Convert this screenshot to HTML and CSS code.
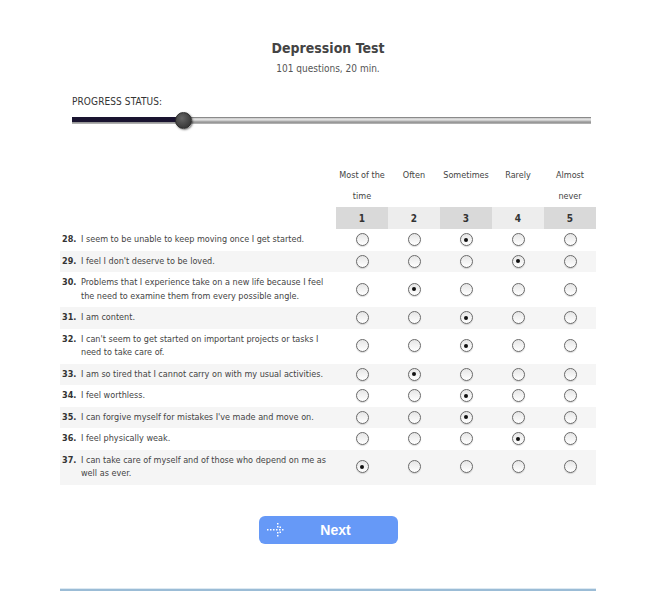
FILE: index.html
```html
<!DOCTYPE html>
<html lang="en">
<head>
    <meta charset="UTF-8">
    <title>Depression Test</title>
    <link rel="stylesheet" href="styles.css">
</head>
<body>
    <div class="page">
        <div class="head">
            <h1>Depression Test</h1>
            <p class="sub">101 questions, 20 min.</p>
        </div>

        <div class="progress">
            <p class="progress-label">PROGRESS STATUS:</p>
            <div class="track">
                <div class="track-done"></div>
                <div class="knob"></div>
            </div>
        </div>

        <table class="quiz">
            <thead>
                <tr class="labels">
                    <th class="q-col"></th>
                    <th>Most of the time</th>
                    <th>Often</th>
                    <th>Sometimes</th>
                    <th>Rarely</th>
                    <th>Almost never</th>
                </tr>
                <tr class="nums">
                    <th class="q-col blank"></th>
                    <th class="dark">1</th>
                    <th class="light">2</th>
                    <th class="dark">3</th>
                    <th class="light">4</th>
                    <th class="dark">5</th>
                </tr>
            </thead>
            <tbody>
                <tr><td class="q"><div class="qtext"><b>28.</b><span>I seem to be unable to keep moving once I get started.</span></div></td><td><input type="radio" name="q28"></td><td><input type="radio" name="q28"></td><td><input type="radio" name="q28" checked></td><td><input type="radio" name="q28"></td><td><input type="radio" name="q28"></td></tr>
                <tr class="alt"><td class="q"><div class="qtext"><b>29.</b><span>I feel I don't deserve to be loved.</span></div></td><td><input type="radio" name="q29"></td><td><input type="radio" name="q29"></td><td><input type="radio" name="q29"></td><td><input type="radio" name="q29" checked></td><td><input type="radio" name="q29"></td></tr>
                <tr><td class="q"><div class="qtext"><b>30.</b><span>Problems that I experience take on a new life because I feel the need to examine them from every possible angle.</span></div></td><td><input type="radio" name="q30"></td><td><input type="radio" name="q30" checked></td><td><input type="radio" name="q30"></td><td><input type="radio" name="q30"></td><td><input type="radio" name="q30"></td></tr>
                <tr class="alt"><td class="q"><div class="qtext"><b>31.</b><span>I am content.</span></div></td><td><input type="radio" name="q31"></td><td><input type="radio" name="q31"></td><td><input type="radio" name="q31" checked></td><td><input type="radio" name="q31"></td><td><input type="radio" name="q31"></td></tr>
                <tr><td class="q"><div class="qtext"><b>32.</b><span>I can't seem to get started on important projects or tasks I need to take care of.</span></div></td><td><input type="radio" name="q32"></td><td><input type="radio" name="q32"></td><td><input type="radio" name="q32" checked></td><td><input type="radio" name="q32"></td><td><input type="radio" name="q32"></td></tr>
                <tr class="alt"><td class="q"><div class="qtext"><b>33.</b><span>I am so tired that I cannot carry on with my usual activities.</span></div></td><td><input type="radio" name="q33"></td><td><input type="radio" name="q33" checked></td><td><input type="radio" name="q33"></td><td><input type="radio" name="q33"></td><td><input type="radio" name="q33"></td></tr>
                <tr><td class="q"><div class="qtext"><b>34.</b><span>I feel worthless.</span></div></td><td><input type="radio" name="q34"></td><td><input type="radio" name="q34"></td><td><input type="radio" name="q34" checked></td><td><input type="radio" name="q34"></td><td><input type="radio" name="q34"></td></tr>
                <tr class="alt"><td class="q"><div class="qtext"><b>35.</b><span>I can forgive myself for mistakes I've made and move on.</span></div></td><td><input type="radio" name="q35"></td><td><input type="radio" name="q35"></td><td><input type="radio" name="q35" checked></td><td><input type="radio" name="q35"></td><td><input type="radio" name="q35"></td></tr>
                <tr><td class="q"><div class="qtext"><b>36.</b><span>I feel physically weak.</span></div></td><td><input type="radio" name="q36"></td><td><input type="radio" name="q36"></td><td><input type="radio" name="q36"></td><td><input type="radio" name="q36" checked></td><td><input type="radio" name="q36"></td></tr>
                <tr class="alt"><td class="q"><div class="qtext"><b>37.</b><span>I can take care of myself and of those who depend on me as well as ever.</span></div></td><td><input type="radio" name="q37" checked></td><td><input type="radio" name="q37"></td><td><input type="radio" name="q37"></td><td><input type="radio" name="q37"></td><td><input type="radio" name="q37"></td></tr>
            </tbody>
        </table>

        <div class="actions">
            <button class="next">
                <svg class="arrow" width="18" height="14" viewBox="0 0 18 14">
                    <g fill="#fff">
                        <rect x="0" y="6" width="1.5" height="1.5"/>
                        <rect x="3" y="6" width="1.5" height="1.5"/>
                        <rect x="6" y="6" width="1.5" height="1.5"/>
                        <rect x="9" y="6" width="1.5" height="1.5"/>
                        <rect x="12" y="6" width="1.5" height="1.5"/>
                        <rect x="15" y="6" width="1.5" height="1.5"/>
                        <rect x="10" y="0" width="1.5" height="1.5"/>
                        <rect x="10" y="3" width="1.5" height="1.5"/>
                        <rect x="10" y="9" width="1.5" height="1.5"/>
                        <rect x="10" y="12" width="1.5" height="1.5"/>
                        <rect x="12.5" y="3.5" width="1.5" height="1.5"/>
                        <rect x="12.5" y="8.5" width="1.5" height="1.5"/>
                    </g>
                </svg>
                Next
            </button>
        </div>

        <div class="footer-line"></div>
    </div>
</body>
</html>
```

FILE: styles.css
```css
body {
    margin: 0;
    background: #fff;
    font-family: 'DejaVu Sans Condensed', 'DejaVu Sans', sans-serif;
    color: #444;
}

.page {
    width: 536px;
    margin: 0 auto;
    padding-top: 39px;
}

/* Kopfbereich */
.head {
    text-align: center;
}

h1 {
    margin: 0;
    font-size: 14px;
    font-weight: bold;
    color: #444;
    line-height: 18px;
}

.sub {
    margin: 6px 0 0;
    font-size: 10px;
    color: #555;
}

/* Fortschrittsbalken */
.progress {
    padding: 22px 5px 0 12px;
}

.progress-label {
    margin: 0;
    font-size: 10px;
    color: #333;
    letter-spacing: 0.1px;
}

.track {
    position: relative;
    height: 7px;
    margin-top: 10px;
    background: linear-gradient(#8a8a8a 0, #8a8a8a 1px, #c9c9c9 1px, #e8e8e8 3px, #b0b0b0 4px, #909090 6px, #cfcfcf 7px);
}

.track-done {
    width: 111px;
    height: 5px;
    margin-top: 1px;
    background: #1a1430;
}

.knob {
    position: absolute;
    left: 103px;
    top: -5px;
    width: 15px;
    height: 15px;
    border-radius: 50%;
    background: radial-gradient(circle at 40% 35%, #666, #3a3a3a 70%);
    border: 1px solid #2a2a2a;
    box-shadow: 1px 1px 2px rgba(0, 0, 0, 0.5);
}

/* Fragebogen */
.quiz {
    width: 536px;
    margin-top: 39px;
    border-collapse: collapse;
    table-layout: fixed;
    font-size: 9px;
}

.quiz th {
    box-sizing: border-box;
    width: 52px;
    padding: 0;
    font-weight: normal;
    text-align: center;
    color: #444;
}

.quiz th.q-col {
    width: 276px;
}

.labels th {
    vertical-align: top;
    line-height: 21px;
    padding: 2px 0 0;
}

.nums th {
    height: 22px;
    font-size: 10px;
    font-weight: bold;
    color: #333;
}

.nums th.dark {
    background: #d9d9d9;
}

.nums th.light {
    background: #ededed;
}

.nums th.blank {
    background: none;
}

.quiz td {
    padding: 4px 0;
    text-align: center;
    vertical-align: middle;
    line-height: 13.5px;
}

.quiz tr.alt td {
    background: #f5f5f5;
}

.quiz td.q {
    text-align: left;
    padding: 4px 10px 4px 2px;
}

.qtext {
    display: flex;
    color: #444;
}

.qtext b {
    flex: 0 0 19px;
    color: #333;
}

.qtext span {
    flex: 1;
}

/* Radio-Buttons im alten Look */
.quiz input[type="radio"] {
    appearance: none;
    -webkit-appearance: none;
    width: 13px;
    height: 13px;
    margin: 0;
    border: 1px solid #6a6a6a;
    border-radius: 50%;
    background: linear-gradient(#e6e6e6, #ffffff);
    box-shadow: 0 1px 1px rgba(0, 0, 0, 0.15);
    vertical-align: middle;
    position: relative;
}

.quiz input[type="radio"]:checked::after {
    content: "";
    position: absolute;
    left: 3.5px;
    top: 3.5px;
    width: 4px;
    height: 4px;
    border-radius: 50%;
    background: #111;
}

/* Weiter-Knopf */
.actions {
    display: flex;
    justify-content: center;
    margin-top: 31px;
}

.next {
    position: relative;
    width: 139px;
    height: 28px;
    border: none;
    border-radius: 6px;
    background: #6699f7;
    color: #fff;
    font-family: 'Liberation Sans', Arial, sans-serif;
    font-size: 14px;
    font-weight: bold;
    padding: 0 0 0 15px;
    cursor: pointer;
}

.arrow {
    position: absolute;
    left: 8px;
    top: 7px;
}

.footer-line {
    margin-top: 44px;
    height: 2px;
    background: #9bbcd6;
    border-top: 1px solid #dde9f2;
}
```
